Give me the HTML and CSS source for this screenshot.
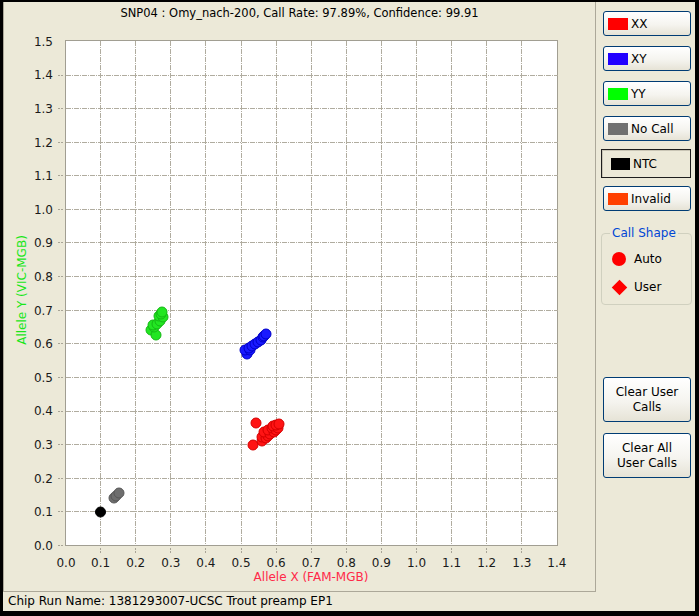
FILE: index.html
```html
<!DOCTYPE html>
<html>
<head>
<meta charset="utf-8">
<link rel="stylesheet" href="styles.css">
</head>
<body>
<div class="window">
  <div class="app">
    <div class="left">
      <div class="chart">
        <div class="title">SNP04 : Omy_nach-200, Call Rate: 97.89%, Confidence: 99.91</div>
        <svg class="plot" viewBox="4 26 591 565" width="591" height="565">
          <rect class="frame" x="65.5" y="40.5" width="492" height="505"/>
          <path class="grid" d="M100.5 41V545M135.5 41V545M170.5 41V545M205.5 41V545M241.5 41V545M276.5 41V545M311.5 41V545M346.5 41V545M381.5 41V545M416.5 41V545M451.5 41V545M486.5 41V545M521.5 41V545M66 511.5H558M66 478.5H558M66 444.5H558M66 411.5H558M66 377.5H558M66 343.5H558M66 310.5H558M66 276.5H558M66 242.5H558M66 209.5H558M66 175.5H558M66 142.5H558M66 108.5H558M66 75.5H558"/>
          <path class="tick" d="M100.5 548V554M135.5 548V554M170.5 548V554M205.5 548V554M241.5 548V554M276.5 548V554M311.5 548V554M346.5 548V554M381.5 548V554M416.5 548V554M451.5 548V554M486.5 548V554M521.5 548V554M58 545.5H63M58 511.5H63M58 478.5H63M58 444.5H63M58 411.5H63M58 377.5H63M58 343.5H63M58 310.5H63M58 276.5H63M58 242.5H63M58 209.5H63M58 175.5H63M58 142.5H63M58 108.5H63M58 75.5H63"/>
          <g class="ylab">
            <text x="53" y="550">0.0</text>
            <text x="53" y="516">0.1</text>
            <text x="53" y="483">0.2</text>
            <text x="53" y="449">0.3</text>
            <text x="53" y="415">0.4</text>
            <text x="53" y="382">0.5</text>
            <text x="53" y="348">0.6</text>
            <text x="53" y="315">0.7</text>
            <text x="53" y="281">0.8</text>
            <text x="53" y="247">0.9</text>
            <text x="53" y="214">1.0</text>
            <text x="53" y="180">1.1</text>
            <text x="53" y="147">1.2</text>
            <text x="53" y="113">1.3</text>
            <text x="53" y="79">1.4</text>
            <text x="53" y="46">1.5</text>
          </g>
          <g class="xlab">
            <text x="66" y="567">0.0</text>
            <text x="100.6" y="567">0.1</text>
            <text x="135.7" y="567">0.2</text>
            <text x="170.8" y="567">0.3</text>
            <text x="205.9" y="567">0.4</text>
            <text x="241" y="567">0.5</text>
            <text x="276.1" y="567">0.6</text>
            <text x="311.2" y="567">0.7</text>
            <text x="346.3" y="567">0.8</text>
            <text x="381.4" y="567">0.9</text>
            <text x="416.5" y="567">1.0</text>
            <text x="451.6" y="567">1.1</text>
            <text x="486.7" y="567">1.2</text>
            <text x="521.8" y="567">1.3</text>
            <text x="556.9" y="567">1.4</text>
          </g>
          <text class="xtitle" x="311" y="581">Allele X (FAM-MGB)</text>
          <text class="ytitle" x="22" y="294" transform="rotate(-90 22 290)">Allele Y (VIC-MGB)</text>
          <g class="dot yy">
            <circle cx="151" cy="330" r="5"/>
            <circle cx="156" cy="335" r="5"/>
            <circle cx="154" cy="327" r="5"/>
            <circle cx="153" cy="325" r="5"/>
            <circle cx="157" cy="324" r="5"/>
            <circle cx="160" cy="321" r="5"/>
            <circle cx="159" cy="316" r="5"/>
            <circle cx="163" cy="317" r="5"/>
            <circle cx="161" cy="314" r="5"/>
            <circle cx="162" cy="312" r="5"/>
          </g>
          <g class="dot xy">
            <circle cx="247" cy="354" r="5"/>
            <circle cx="245" cy="350" r="5"/>
            <circle cx="250" cy="350" r="5"/>
            <circle cx="249" cy="348" r="5"/>
            <circle cx="252" cy="346" r="5"/>
            <circle cx="255" cy="344" r="5"/>
            <circle cx="258" cy="342" r="5"/>
            <circle cx="261" cy="340" r="5"/>
            <circle cx="263" cy="337" r="5"/>
            <circle cx="264" cy="336" r="5"/>
            <circle cx="266" cy="334" r="5"/>
          </g>
          <g class="dot xx">
            <circle cx="256" cy="423" r="5"/>
            <circle cx="253" cy="445" r="5"/>
            <circle cx="262" cy="441" r="5"/>
            <circle cx="262" cy="437" r="5"/>
            <circle cx="266" cy="438" r="5"/>
            <circle cx="268" cy="436" r="5"/>
            <circle cx="264" cy="432" r="5"/>
            <circle cx="270" cy="434" r="5"/>
            <circle cx="268" cy="430" r="5"/>
            <circle cx="274" cy="432" r="5"/>
            <circle cx="272" cy="428" r="5"/>
            <circle cx="276" cy="430" r="5"/>
            <circle cx="273" cy="426" r="5"/>
            <circle cx="278" cy="428" r="5"/>
            <circle cx="276" cy="425" r="5"/>
            <circle cx="279" cy="424" r="5"/>
          </g>
          <g class="dot nc">
            <circle cx="114" cy="498" r="5"/>
            <circle cx="116" cy="496" r="5"/>
            <circle cx="119" cy="493" r="5"/>
          </g>
          <g class="dot ntc">
            <circle cx="100.5" cy="512" r="5"/>
          </g>
        </svg>
      </div>
      <div class="status">Chip Run Name: 1381293007-UCSC Trout preamp EP1</div>
    </div>
    <div class="side">
      <div class="slot"><button class="btn"><span class="sw c-xx"></span>XX</button></div>
      <div class="slot"><button class="btn"><span class="sw c-xy"></span>XY</button></div>
      <div class="slot"><button class="btn"><span class="sw c-yy"></span>YY</button></div>
      <div class="slot"><button class="btn"><span class="sw c-nc"></span>No Call</button></div>
      <div class="slot"><button class="btn ntc-btn"><span class="sw c-ntc"></span>NTC</button></div>
      <div class="slot"><button class="btn"><span class="sw c-inv"></span>Invalid</button></div>
      <fieldset class="shape">
        <legend>Call Shape</legend>
        <div class="shape-row"><span class="ico"><span class="circle"></span></span>Auto</div>
        <div class="shape-row"><span class="ico"><span class="diamond"></span></span>User</div>
      </fieldset>
      <button class="btn big first">Clear User<br>Calls</button>
      <button class="btn big">Clear All<br>User Calls</button>
    </div>
  </div>
</div>
</body>
</html>
```
FILE: styles.css
```css
html, body {
  margin: 0;
  background: #000;
}
.window {
  width: 699px;
  height: 616px;
  box-sizing: border-box;
  padding: 2px 4px 5px 3px;
  background: #000;
}
.app {
  display: flex;
  height: 100%;
  background: #ECE9D8;
  font-family: "DejaVu Sans", "Liberation Sans", sans-serif;
  color: #000;
}
.left {
  width: 593px;
  display: flex;
  flex-direction: column;
}
.chart {
  height: 589px;
  border: 1px solid #ACA899;
  border-top: 0;
  display: flex;
  flex-direction: column;
}
.title {
  height: 24px;
  line-height: 22px;
  text-align: center;
  font-size: 11.5px;
}
.plot {
  display: block;
  width: 591px;
  height: 565px;
  font-family: "DejaVu Sans", "Liberation Sans", sans-serif;
  font-size: 12px;
}
.frame {
  fill: #fff;
  stroke: #A19E92;
  stroke-width: 1;
}
.grid {
  fill: none;
  stroke: #B0AC9F;
  stroke-width: 1;
  stroke-dasharray: 5 1 1 1;
}
.tick {
  fill: none;
  stroke: #A8A496;
  stroke-width: 1;
  stroke-dasharray: 2 1;
}
.ylab text {
  text-anchor: end;
  fill: #1a1a1a;
}
.xlab text {
  text-anchor: middle;
  fill: #1a1a1a;
}
.xtitle {
  text-anchor: middle;
  fill: #FF2848;
}
.ytitle {
  text-anchor: middle;
  fill: #19E619;
}
.dot circle { stroke-width: 1; }
.yy circle { fill: #22E622; stroke: #14B814; }
.xy circle { fill: #1A1AFF; stroke: #0000C8; }
.xx circle { fill: #FF1414; stroke: #D40000; }
.nc circle { fill: #6E6E6E; stroke: #575757; }
.ntc circle { fill: #000; stroke: #000; }
.status {
  height: 19px;
  line-height: 19px;
  padding-left: 5px;
  font-size: 12px;
}
.side {
  width: 99px;
  box-sizing: border-box;
  display: flex;
  flex-direction: column;
  padding: 4px 4px 0 7px;
}
.slot {
  height: 35px;
  display: flex;
  align-items: center;
}
.btn {
  width: 88px;
  height: 25px;
  box-sizing: border-box;
  margin: 0;
  border: 1px solid #003C74;
  border-radius: 3px;
  background: linear-gradient(#FFFFFF, #F5F4EF 55%, #E6E3D6);
  display: flex;
  align-items: center;
  padding: 0 0 0 4px;
  font-family: "DejaVu Sans", "Liberation Sans", sans-serif;
  font-size: 12px;
  color: #000;
}
.sw {
  width: 20px;
  height: 12px;
  margin-right: 3px;
}
.c-xx { background: #FF0000; }
.c-xy { background: #2200FF; }
.c-yy { background: #00FF00; }
.c-nc { background: #707070; }
.c-ntc { background: #000; width: 19px; }
.c-inv { background: #FF4000; }
.ntc-btn {
  width: 91px;
  height: 29px;
  margin-left: -2px;
  border: 1px solid #1E1E1E;
  border-radius: 0;
  background: #ECE9D8;
  box-shadow: inset 1px 1px 0 #C9C5B5;
  padding-left: 9px;
}
.shape {
  margin: 10px 0 0 -2px;
  width: 91px;
  box-sizing: border-box;
  border: 1px solid #D0D0BF;
  border-radius: 4px;
  padding: 5px 0 3px 8px;
}
.shape legend {
  padding: 0 2px;
  font-size: 12px;
  line-height: 14px;
  color: #0046D5;
}
.shape-row {
  height: 28px;
  display: flex;
  align-items: center;
  font-size: 12px;
}
.ico {
  width: 18px;
  height: 18px;
  margin-right: 6px;
  display: flex;
  align-items: center;
  justify-content: center;
}
.circle {
  width: 14px;
  height: 14px;
  border-radius: 50%;
  background: #FF0000;
}
.diamond {
  width: 11px;
  height: 11px;
  background: #FF0000;
  transform: rotate(45deg);
}
.big {
  height: 45px;
  justify-content: center;
  padding: 0;
  line-height: 15px;
  text-align: center;
  margin-top: 11px;
}
.big.first {
  margin-top: 72px;
}
```
